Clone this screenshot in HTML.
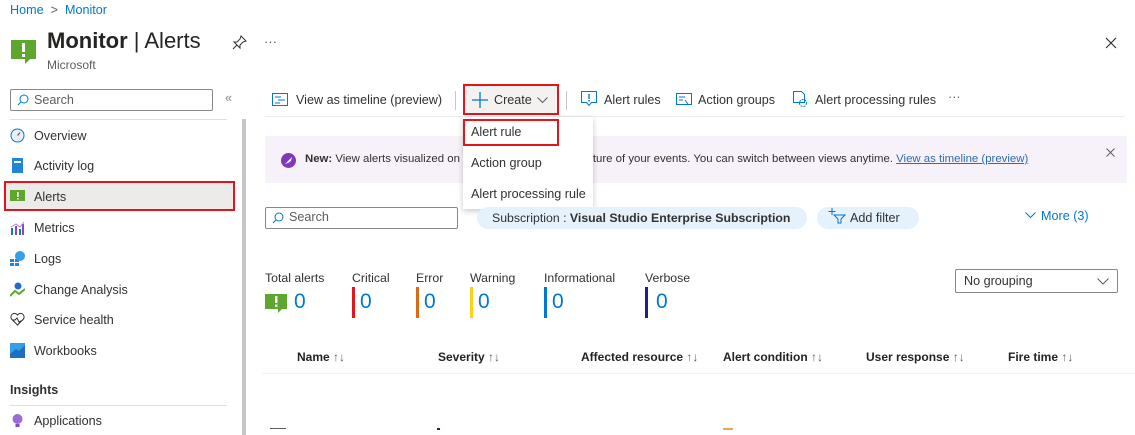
<!DOCTYPE html>
<html><head><meta charset="utf-8"><style>
*{box-sizing:border-box;margin:0;padding:0}
body{width:1135px;height:435px;overflow:hidden;background:#fff;font-family:"Liberation Sans",sans-serif;font-size:12.6px;color:#323130;position:relative}
.a{position:absolute;white-space:nowrap}
.blue{color:#0078d4}
.nav{position:absolute;left:34px;font-size:12.6px}
.ic{position:absolute;left:10px;width:15px;height:15px}
.sev{position:absolute;top:287px;width:3px;height:31px}
.num{position:absolute;top:290px;font-size:21px;color:#0078d4}
.lab{position:absolute;top:271px;font-size:12.3px}
.th{position:absolute;top:350px;font-size:12px;font-weight:600;color:#252423}
.th span{font-weight:400;color:#605e5c}
</style></head><body>
<div class="a blue" style="left:10px;top:3px">Home <span style="color:#605e5c">&nbsp;&gt;&nbsp;</span> Monitor</div>
<svg class="a" style="left:11px;top:40px" width="26" height="24"><rect x="0" y="0" width="25" height="19" fill="#5ea62e"/><path d="M14 19 L14 24 L19 19Z" fill="#5ea62e"/><rect x="11" y="3" width="3" height="9" fill="#fff"/><rect x="11" y="14" width="3" height="3" fill="#fff"/></svg>
<div class="a" style="left:47px;top:28px;font-size:22px;font-weight:600;color:#252423">Monitor <span style="font-weight:400">| Alerts</span></div>
<div class="a" style="left:47px;top:58px;font-size:12px;color:#605e5c">Microsoft</div>
<svg class="a" style="left:232px;top:35px" width="15" height="15"><path d="M9 1 L14 6 L11 7 L8 10 L8 13 L2 7 L5 7 L8 4Z M5 10 L1 14" stroke="#323130" fill="none"/></svg>
<div class="a" style="left:264px;top:34px;font-size:13px;color:#605e5c">···</div>
<svg class="a" style="left:1105px;top:37px" width="12" height="12"><path d="M1 1L11 11M11 1L1 11" stroke="#323130" stroke-width="1.2"/></svg>

<div class="a" style="left:10px;top:89px;width:203px;height:22px;border:1px solid #8a8886;border-radius:2px"></div>
<svg class="a" style="left:17px;top:94px" width="12" height="12"><circle cx="7" cy="5" r="4" fill="none" stroke="#0078d4"/><path d="M4 8L1 11" stroke="#0078d4"/></svg>
<div class="a" style="left:34px;top:93px;color:#605e5c">Search</div>
<div class="a" style="left:225px;top:91px;color:#8a8886">«</div>
<div class="a" style="left:10px;top:119px;width:217px;height:1px;background:#e1dfdd"></div>
<div class="a" style="left:242px;top:119px;width:4px;height:316px;background:#c8c6c4"></div>

<svg class="ic" style="top:128px" viewBox="0 0 15 15"><circle cx="7.5" cy="7.5" r="6.5" fill="#e6f2fb" stroke="#0078d4"/><path d="M7.5 7.5 L10 4.5" stroke="#d13438" stroke-width="1.3"/></svg>
<div class="nav" style="top:129px">Overview</div>
<svg class="ic" style="top:158px" viewBox="0 0 15 15"><rect x="2" y="0" width="11" height="15" fill="#1f86d8"/><rect x="4" y="3" width="7" height="2" fill="#fff"/></svg>
<div class="nav" style="top:159px">Activity log</div>
<div class="a" style="left:4px;top:181px;width:231px;height:30px;background:#edebe9;border:2px solid #e3141b"></div>
<svg class="ic" style="top:189px" viewBox="0 0 15 15"><rect x="0" y="1" width="15" height="11" fill="#5ea62e"/><rect x="7" y="3" width="1.6" height="5" fill="#fff"/><rect x="7" y="9" width="1.6" height="1.6" fill="#fff"/></svg>
<div class="nav" style="top:190px">Alerts</div>
<svg class="ic" style="top:220px" viewBox="0 0 15 15"><rect x="1" y="8" width="2" height="7" fill="#1f6fc0"/><rect x="5" y="6" width="2" height="9" fill="#7b4cc4"/><rect x="9" y="9" width="2" height="6" fill="#1f6fc0"/><rect x="12" y="4" width="2" height="11" fill="#7b4cc4"/><path d="M1 7 L6 4 L10 7 L14 2" stroke="#b27de0" fill="none"/></svg>
<div class="nav" style="top:221px">Metrics</div>
<svg class="ic" style="top:251px" viewBox="0 0 15 15"><rect x="0" y="8" width="4" height="3" fill="#1f86d8"/><rect x="5" y="8" width="4" height="3" fill="#1f86d8"/><rect x="0" y="12" width="4" height="3" fill="#1f86d8"/><rect x="5" y="12" width="4" height="3" fill="#1f86d8"/><circle cx="10" cy="5" r="5" fill="#35a0e8"/></svg>
<div class="nav" style="top:252px">Logs</div>
<svg class="ic" style="top:282px" viewBox="0 0 15 15"><path d="M0 14 L5 9 L9 12 L15 7" stroke="#5ea62e" stroke-width="2" fill="none"/><circle cx="8" cy="4" r="3.5" fill="#1f6fc0"/></svg>
<div class="nav" style="top:283px">Change Analysis</div>
<svg class="ic" style="top:312px" viewBox="0 0 15 15"><path d="M7.5 13 L1.5 7 A3.3 3.3 0 0 1 7.5 3 A3.3 3.3 0 0 1 13.5 7Z M2 8 L5 8 L7 6 L9 10 L13 8" stroke="#323130" fill="none"/></svg>
<div class="nav" style="top:313px">Service health</div>
<svg class="ic" style="top:343px" viewBox="0 0 15 15"><rect width="15" height="15" fill="#35a0e8"/><path d="M0 15 L0 11 L6 6 L9 8 L15 2 L15 15Z" fill="#1f6fc0"/></svg>
<div class="nav" style="top:344px">Workbooks</div>
<div class="a" style="left:10px;top:383px;font-weight:600">Insights</div>
<div class="a" style="left:10px;top:405px;width:217px;height:1px;background:#e1dfdd"></div>
<svg class="ic" style="top:413px" viewBox="0 0 15 15"><circle cx="7.5" cy="6" r="5" fill="#9b6bd6"/><rect x="5.5" y="11" width="4" height="3" fill="#7b4cc4"/></svg>
<div class="nav" style="top:414px">Applications</div>

<!-- toolbar -->
<svg class="a" style="left:272px;top:93px" width="16" height="13"><rect x="0.5" y="0.5" width="15" height="12" fill="none" stroke="#0078d4"/><path d="M3 4h6M6 7h7M3 10h5" stroke="#0078d4"/></svg>
<div class="a" style="left:296px;top:93px">View as timeline (preview)</div>
<div class="a" style="left:455px;top:91px;width:1px;height:19px;background:#c8c6c4"></div>
<div class="a" style="left:463px;top:84px;width:96px;height:31px;border:2px solid #e3141b;background:#f3f2f1"></div>
<svg class="a" style="left:472px;top:92px" width="16" height="16"><path d="M8 0V16M0 8H16" stroke="#0078d4" stroke-width="1.3"/></svg>
<div class="a" style="left:494px;top:93px">Create</div>
<svg class="a" style="left:537px;top:97px" width="11" height="7"><path d="M0.5 0.5L5.5 5.5L10.5 0.5" stroke="#605e5c" fill="none"/></svg>
<div class="a" style="left:566px;top:91px;width:1px;height:19px;background:#c8c6c4"></div>
<svg class="a" style="left:581px;top:91px" width="16" height="16"><path d="M0.5 0.5h15v11h-5l-2.5 3l-2.5-3h-5z" fill="none" stroke="#0078d4"/><path d="M8 3v5M8 9v1.5" stroke="#0078d4" stroke-width="1.4"/></svg>
<div class="a" style="left:604px;top:93px">Alert rules</div>
<svg class="a" style="left:676px;top:93px" width="16" height="14"><rect x="0.5" y="0.5" width="15" height="11" fill="none" stroke="#0078d4"/><path d="M3 4h6M3 7h4M9 7l3 4" stroke="#0078d4"/></svg>
<div class="a" style="left:698px;top:93px">Action groups</div>
<svg class="a" style="left:792px;top:91px" width="16" height="17"><path d="M1.5 0.5h8l3 3v8h-11z" fill="none" stroke="#0078d4"/><circle cx="11" cy="12" r="3.5" fill="none" stroke="#0078d4" stroke-dasharray="2 1"/></svg>
<div class="a" style="left:815px;top:93px">Alert processing rules</div>
<div class="a" style="left:948px;top:90px;color:#605e5c">···</div>
<div class="a" style="left:265px;top:116px;width:860px;height:1px;background:#edebe9"></div>

<!-- banner -->
<div class="a" style="left:265px;top:136px;width:862px;height:47px;background:#f7f2f9"></div>
<svg class="a" style="left:281px;top:153px" width="15" height="15"><circle cx="7.5" cy="7.5" r="7.5" fill="#8039bd"/><path d="M4 11 L7 8 L11 4 L10 8 L7 10Z" fill="#fff"/></svg>
<div class="a" style="left:305px;top:153px;font-size:11.4px"><b>New:</b> View alerts visualized on a timeline to see the structure of your events. You can switch between views anytime. <span style="text-decoration:underline;color:#2b6cb0">View as timeline (preview)</span></div>
<svg class="a" style="left:1106px;top:148px" width="9" height="9"><path d="M0.5 0.5L8.5 8.5M8.5 0.5L0.5 8.5" stroke="#605e5c"/></svg>

<!-- dropdown -->
<div class="a" style="left:463px;top:117px;width:130px;height:92px;background:#fff;box-shadow:0 2px 6px rgba(0,0,0,.22)"></div>
<div class="a" style="left:463px;top:119px;width:96px;height:27px;border:2px solid #e3141b"></div>
<div class="a" style="left:471px;top:125px">Alert rule</div>
<div class="a" style="left:471px;top:156px">Action group</div>
<div class="a" style="left:471px;top:187px">Alert processing rule</div>

<!-- filters -->
<div class="a" style="left:265px;top:207px;width:193px;height:22px;border:1px solid #8a8886;border-radius:2px"></div>
<svg class="a" style="left:272px;top:212px" width="12" height="12"><circle cx="7" cy="5" r="4" fill="none" stroke="#0078d4"/><path d="M4 8L1 11" stroke="#0078d4"/></svg>
<div class="a" style="left:289px;top:210px;color:#605e5c">Search</div>
<div class="a" style="left:477px;top:207px;width:330px;height:22px;border-radius:11px;background:#e5f1fb"></div>
<div class="a" style="left:492px;top:211px;font-size:12.3px">Subscription : <b>Visual Studio Enterprise Subscription</b></div>
<div class="a" style="left:817px;top:207px;width:102px;height:22px;border-radius:11px;background:#e5f1fb"></div>
<svg class="a" style="left:828px;top:207px" width="18" height="18"><path d="M4 1V8M0.5 4.5H7.5" stroke="#0078d4"/><path d="M6 8H17L13 12V16H10V12Z" fill="none" stroke="#0078d4"/></svg>
<div class="a" style="left:850px;top:211px">Add filter</div>
<svg class="a" style="left:1025px;top:212px" width="11" height="7"><path d="M0.5 0.5L5.5 5.5L10.5 0.5" stroke="#0078d4" fill="none"/></svg>
<div class="a blue" style="left:1041px;top:209px">More (3)</div>

<!-- stats -->
<div class="lab" style="left:265px">Total alerts</div>
<svg class="a" style="left:265px;top:294px" width="23" height="19"><rect width="22" height="15" fill="#5ea62e"/><path d="M13 15v4l4-4z" fill="#5ea62e"/><rect x="10" y="2" width="2.4" height="7" fill="#fff"/><rect x="10" y="10.5" width="2.4" height="2.4" fill="#fff"/></svg>
<div class="num" style="left:294px">0</div>
<div class="lab" style="left:352px">Critical</div><div class="sev" style="left:352px;background:#e3141b"></div><div class="num" style="left:360px">0</div>
<div class="lab" style="left:416px">Error</div><div class="sev" style="left:416px;background:#da6a1a"></div><div class="num" style="left:424px">0</div>
<div class="lab" style="left:470px">Warning</div><div class="sev" style="left:470px;background:#fcd116"></div><div class="num" style="left:478px">0</div>
<div class="lab" style="left:544px">Informational</div><div class="sev" style="left:544px;background:#0078d4"></div><div class="num" style="left:552px">0</div>
<div class="lab" style="left:645px">Verbose</div><div class="sev" style="left:645px;background:#1b1f8f"></div><div class="num" style="left:656px">0</div>
<div class="a" style="left:955px;top:269px;width:163px;height:24px;border:1px solid #8a8886;border-radius:2px"></div>
<div class="a" style="left:964px;top:274px">No grouping</div>
<svg class="a" style="left:1097px;top:278px" width="12" height="7"><path d="M0.5 0.5L6 6L11.5 0.5" stroke="#605e5c" fill="none"/></svg>

<!-- table header -->
<div class="th" style="left:297px">Name <span>↑↓</span></div>
<div class="th" style="left:438px">Severity <span>↑↓</span></div>
<div class="th" style="left:581px">Affected resource <span>↑↓</span></div>
<div class="th" style="left:723px">Alert condition <span>↑↓</span></div>
<div class="th" style="left:866px">User response <span>↑↓</span></div>
<div class="th" style="left:1008px">Fire time <span>↑↓</span></div>
<div class="a" style="left:262px;top:373px;width:873px;height:1px;background:#f3f2f1"></div>
<div class="a" style="left:270px;top:428px;width:16px;height:1px;background:#605e5c"></div>
<div class="a" style="left:437px;top:428px;width:3px;height:2px;background:#1b1f8f"></div>
<div class="a" style="left:723px;top:428px;width:10px;height:2px;background:#f2a65a"></div>
</body></html>
